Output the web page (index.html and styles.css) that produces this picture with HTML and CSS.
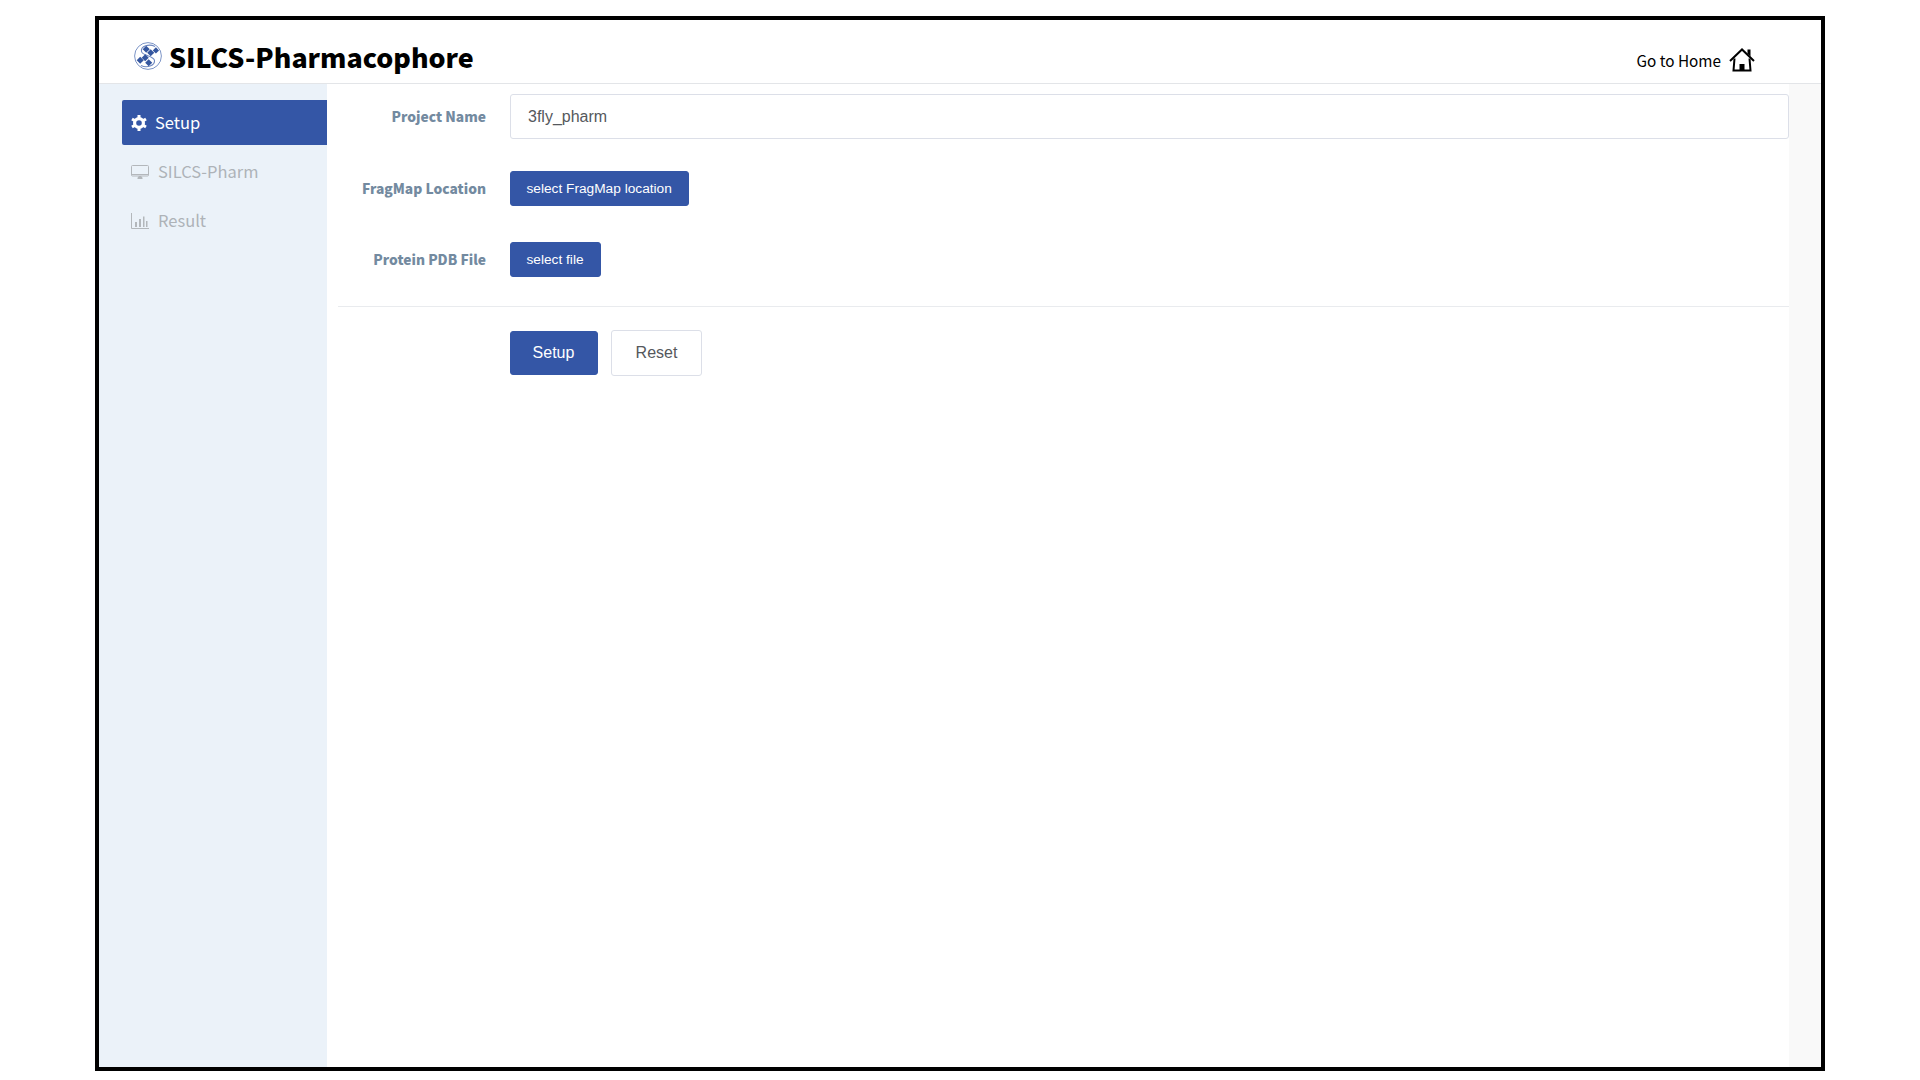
FILE: index.html
```html
<!DOCTYPE html>
<html lang="en">
  <head>
    <meta charset="UTF-8" />
    <title>SILCS-Pharmacophore</title>
    <link rel="stylesheet" href="styles.css">
  </head>
  <body>
    <div class="frame">
      <header class="topbar">
        <div class="brand">
          <svg class="logo" viewBox="0 0 28 28" width="28" height="28">
            <circle cx="14" cy="14" r="13.4" fill="none" stroke="#5b78b8" stroke-width="0.8"/>
            <path d="M21 4.500C15 1.500 6.500 4 7.500 9.500c1 4.500 12.500 4 13 9C21 23.500 13 26.500 7 23.500" fill="none" stroke="#6f88c0" stroke-width="1.100"/>
            <g fill="#34569f">
              <rect x="9.700" y="4.700" width="5" height="5" transform="rotate(45 12.200 7.200)"/>
              <rect x="14.200" y="8.200" width="5" height="5" transform="rotate(45 16.700 10.700)"/>
              <rect x="19.700" y="6.200" width="4.400" height="4.400" transform="rotate(45 21.900 8.400)"/>
              <rect x="8.700" y="13.200" width="5" height="5" transform="rotate(45 11.200 15.700)"/>
              <rect x="3.700" y="15.700" width="5" height="5" transform="rotate(45 6.200 18.200)"/>
              <rect x="12.200" y="18.200" width="5" height="5" transform="rotate(45 14.700 20.700)"/>
            </g>
          </svg>
          <span class="brand-name">SILCS-Pharmacophore</span>
        </div>
        <a class="home-link" href="#">
          <span>Go to Home</span>
          <svg viewBox="0 0 26 24" width="26" height="24">
            <path d="M1 13 13 1.500 25 13" fill="none" stroke="#000" stroke-width="2"/>
            <path d="M5.500 10.500 4.500 22.500h17l-1-12" fill="none" stroke="#000" stroke-width="2"/>
            <path d="M10.500 23v-7h5v7z" fill="#000"/>
            <path d="M18.500 1.500h3v7l-3-3z" fill="#000"/>
          </svg>
        </a>
      </header>

      <div class="body-row">
        <nav class="sidebar">
          <a class="nav-item active" href="#">
            <svg class="nav-icon" viewBox="0 0 16 16" width="16" height="16">
              <circle cx="8" cy="8" r="4.400" fill="none" stroke="#fff" stroke-width="3.200"/>
              <path d="M8 0v3.500M8 12.500V16M1 4l3 1.750M12 10.250 15 12M1 12l3-1.750M12 5.750 15 4" stroke="#fff" stroke-width="3"/>
            </svg>
            <span>Setup</span>
          </a>
          <a class="nav-item" href="#">
            <svg class="nav-icon wide" viewBox="0 0 18 16" width="18" height="16">
              <rect x="0.500" y="1.500" width="17" height="10.500" rx="1" fill="none" stroke="#b3b7bb"/>
              <path d="M0.500 10.500h17" stroke="#b3b7bb"/>
              <path d="M6.500 15v-1.200l1.500-1.800h2l1.500 1.800V15z" fill="#b3b7bb"/>
            </svg>
            <span>SILCS-Pharm</span>
          </a>
          <a class="nav-item" href="#">
            <svg class="nav-icon wide" viewBox="0 0 18 16" width="18" height="16">
              <path d="M0.500 0v15.500H18" fill="none" stroke="#b3b7bb"/>
              <path d="M4 9h2v5H4zM8 6h2v8H8zM12 3.500h1.500V14H12zM15 8h1.500v6H15z" fill="#b3b7bb"/>
            </svg>
            <span>Result</span>
          </a>
        </nav>

        <main class="content">
          <form class="setup-form">
            <div class="form-row name-row">
              <label class="form-label">Project Name</label>
              <input class="text-input" type="text" value="3fly_pharm" readonly>
            </div>
            <div class="form-row location-row">
              <label class="form-label">FragMap Location</label>
              <button class="btn btn-small" type="button">select FragMap location</button>
            </div>
            <div class="form-row file-row">
              <label class="form-label">Protein PDB File</label>
              <button class="btn btn-small" type="button">select file</button>
            </div>
            <div class="form-actions">
              <button class="btn btn-large" type="button">Setup</button>
              <button class="btn-reset" type="button">Reset</button>
            </div>
          </form>
        </main>
      </div>
    </div>
  </body>
</html>
```

FILE: styles.css
```css
html, body {
  margin: 0;
  padding: 0;
  background: #fff;
}

body {
  font-family: "Noto Sans CJK SC", "Noto Sans", sans-serif;
}

.frame {
  box-sizing: border-box;
  width: 1730px;
  height: 1055px;
  margin: 16px 0 0 95px;
  border: 4px solid #000;
  background: #f9f9f9;
  display: flex;
  flex-direction: column;
}

.topbar {
  box-sizing: border-box;
  height: 64px;
  background: #fff;
  border-bottom: 1px solid #e3e5e8;
  display: flex;
  justify-content: space-between;
  padding-left: 35px;
  padding-right: 66px;
}

.brand {
  display: flex;
  align-items: center;
  gap: 7px;
  margin-top: 9px;
}

.brand-name {
  font-size: 26.800px;
  font-weight: 900;
  color: #000;
}

.home-link {
  display: flex;
  align-items: center;
  gap: 8px;
  margin-top: 17px;
  color: #000;
  font-size: 15.300px;
  text-decoration: none;
}

.body-row {
  flex: 1;
  display: flex;
  min-height: 0;
}

.sidebar {
  width: 228px;
  background: #ebf2f9;
  padding: 16px 0 0 23px;
  box-sizing: border-box;
}

.nav-item {
  height: 45px;
  margin-bottom: 4px;
  padding-left: 9px;
  display: flex;
  align-items: center;
  gap: 8px;
  color: #aeb3b8;
  font-size: 16.500px;
  text-decoration: none;
  border-radius: 2px 0 0 2px;
}

.nav-item span {
  margin-bottom: 1px;
}

.nav-icon.wide {
  margin-right: 1px;
}

.nav-item.active {
  background: #3456a6;
  color: #fff;
}

.content {
  width: 1462px;
  background: #fff;
  padding: 10px 0 0 11px;
  box-sizing: border-box;
}

.form-row {
  display: flex;
  align-items: center;
}

.form-label {
  width: 148px;
  margin-right: 24px;
  margin-bottom: 2px;
  text-align: right;
  font-size: 13.800px;
  font-weight: 900;
  color: #738aa0;
}

.name-row {
  margin-bottom: 32px;
}

.location-row {
  margin-bottom: 36px;
}

.file-row {
  padding-bottom: 29px;
  border-bottom: 1px solid #e9ebee;
}

.text-input {
  box-sizing: border-box;
  flex: 1;
  height: 45px;
  border: 1px solid #dcdfe8;
  border-radius: 3px;
  padding: 0 17px;
  font-family: "Liberation Sans", Arial, sans-serif;
  font-size: 16px;
  color: #55585c;
  outline: none;
}

.btn {
  border: 1px solid #3456a6;
  background: #3456a6;
  color: #fff;
  border-radius: 3px;
  font-family: "Liberation Sans", Arial, sans-serif;
  cursor: pointer;
  margin-left: -0.500px;
}

.btn-small {
  height: 35px;
  padding: 0 16px;
  font-size: 13.700px;
}

.btn-large {
  width: 88px;
  height: 44px;
  font-size: 16px;
}

.btn-reset {
  width: 91px;
  height: 46px;
  background: #fff;
  border: 1px solid #dcdfe8;
  border-radius: 3px;
  color: #55585c;
  font-family: "Liberation Sans", Arial, sans-serif;
  font-size: 16px;
  cursor: pointer;
}

.form-actions {
  display: flex;
  align-items: center;
  gap: 13.500px;
  margin-top: 23px;
  padding-left: 172px;
}
```
